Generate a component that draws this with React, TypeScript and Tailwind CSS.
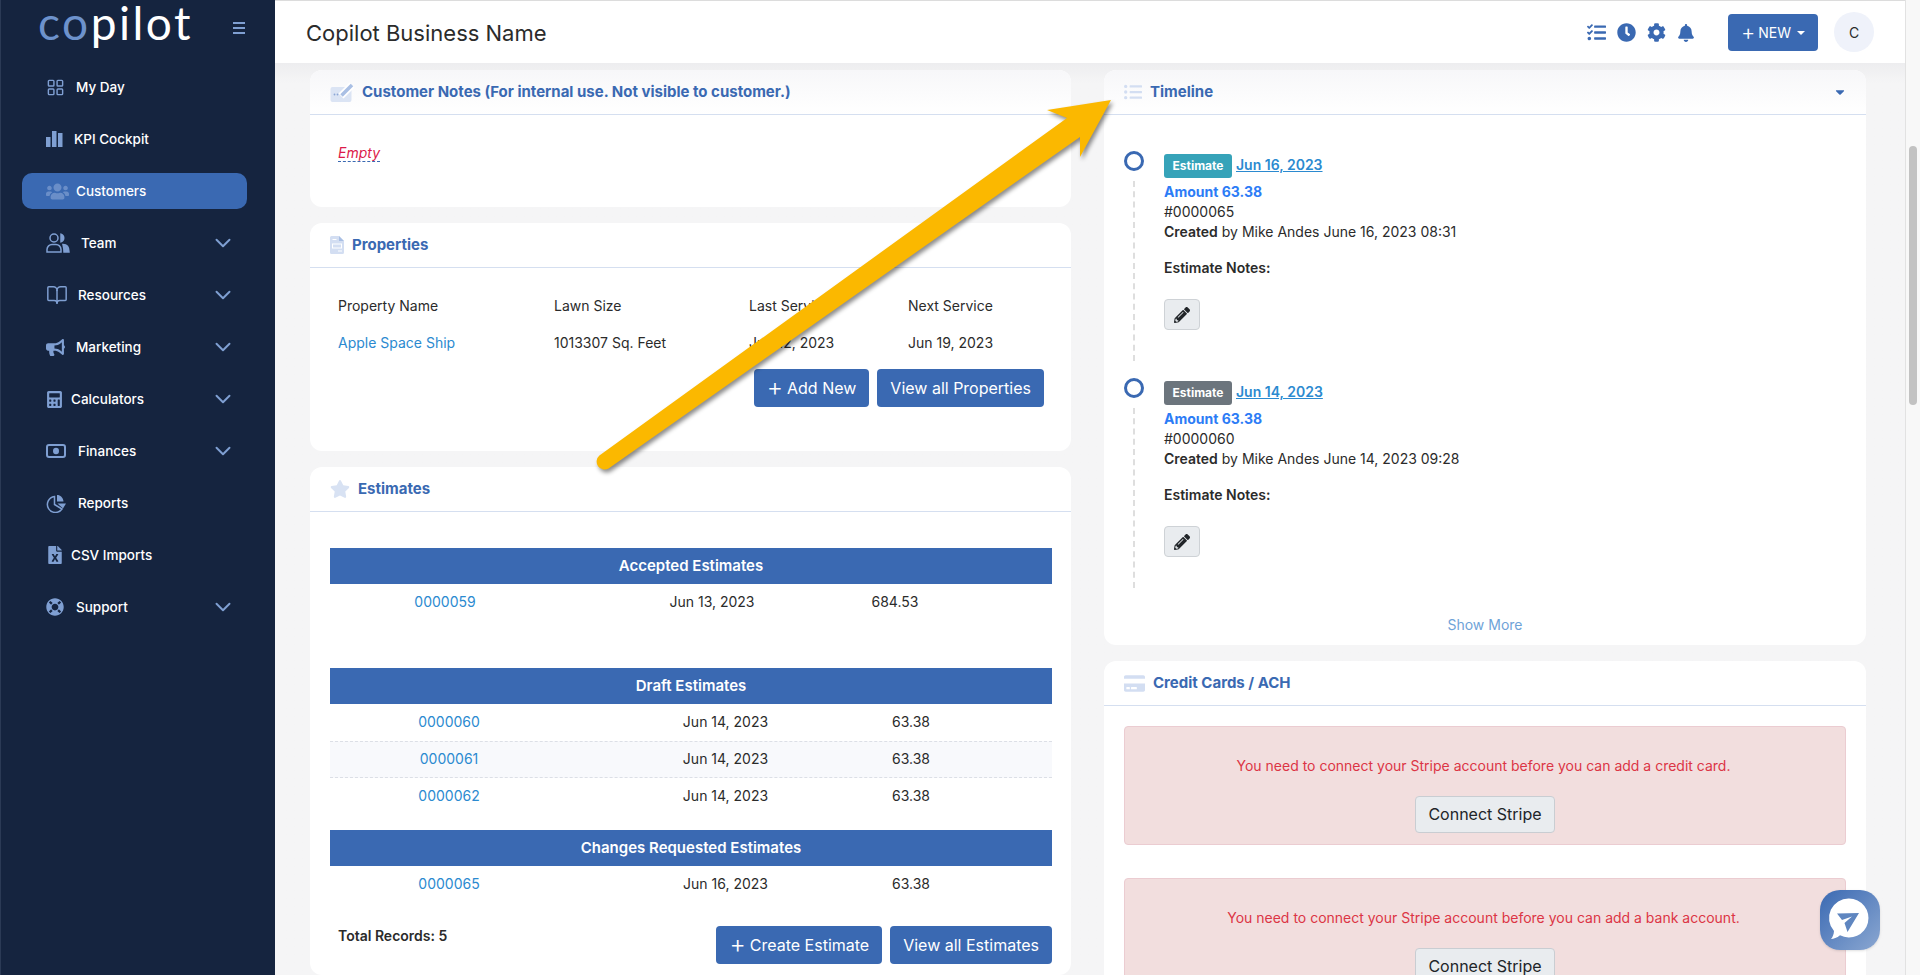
import React from 'react';
import { BookOpen, ChevronDown, LayoutGrid } from 'lucide-react';
import {
  FaBell,
  FaBullhorn,
  FaCalculator,
  FaCaretDown,
  FaClock,
  FaCog,
  FaCreditCard,
  FaFileExcel,
  FaLifeRing,
  FaListUl,
  FaPencilAlt,
  FaStar,
  FaTasks,
  FaUsers,
} from 'react-icons/fa';

const KpiIcon = () => (
  <svg width="17" height="16" viewBox="0 0 17 16" fill="currentColor">
    <rect x="0" y="6" width="4.5" height="10" />
    <rect x="6" y="0" width="4.5" height="16" />
    <rect x="12" y="2" width="4.5" height="14" />
  </svg>
);

const TeamIcon = () => (
  <svg width="24" height="20" viewBox="0 0 24 20" fill="none" stroke="currentColor" strokeWidth="1.5">
    <circle cx="8" cy="5" r="4" />
    <path d="M1 19v-2.500c0-3 2.500-5 5-5h4c2.500 0 5 2 5 5V19z" />
    <path d="M15 1.200a4 4 0 0 1 0 7.600z" fill="currentColor" />
    <path d="M17 11.500c3.500 0 6 2.500 6 7.500h-5c0-3-.5-5.500-1-7.500z" fill="currentColor" />
  </svg>
);

const MoneyIcon = () => (
  <svg width="20" height="14" viewBox="0 0 20 14" fill="none">
    <rect x="1" y="1" width="18" height="12" rx="2" stroke="currentColor" strokeWidth="2" />
    <ellipse cx="10" cy="7" rx="3" ry="3.300" fill="currentColor" />
  </svg>
);

const ReportIcon = () => (
  <svg width="20" height="19" viewBox="0 0 20 19" fill="none" stroke="currentColor" strokeWidth="1.5">
    <path d="M8.500 2.500a8 8 0 1 0 7.500 12.500l-7.500-4.500z" />
    <path d="M11 1c3.500 0 6 2.500 6.500 6.500H11z" fill="currentColor" stroke="none" />
    <path d="M11.500 9.500H20l-3 5z" fill="currentColor" stroke="none" />
  </svg>
);

const NotesIcon = () => (
  <svg width="24" height="20" viewBox="0 0 24 20">
    <rect x="0.500" y="5" width="21" height="15" rx="2" fill="#dbe4f4" />
    <path d="M11 14L22 3" stroke="#fff" strokeWidth="7" />
    <path d="M11.500 13.500L22 3" stroke="#a9bfe4" strokeWidth="3.500" />
    <circle cx="4.500" cy="12.500" r="0.900" fill="#8ba6d6" />
    <circle cx="7.500" cy="12.500" r="0.900" fill="#8ba6d6" />
  </svg>
);

const PropertyIcon = () => (
  <svg width="14" height="18" viewBox="0 0 14 18" className="text-[#d3def2]" fill="currentColor">
    <path d="M1.500 0H9l5 5v11.500a1.500 1.500 0 0 1-1.500 1.500h-11A1.500 1.500 0 0 1 0 16.500v-15A1.500 1.500 0 0 1 1.500 0z" />
    <path d="M9 0l5 5H9z" fill="#a9bfe4" />
    <rect x="2.500" y="8" width="9" height="4" fill="none" stroke="#fff" strokeWidth="1" />
    <rect x="2.500" y="3" width="4" height="1" fill="#fff" />
    <rect x="8" y="14.500" width="4" height="1" fill="#fff" />
  </svg>
);

const navItems = [
  { label: 'My Day', icon: <LayoutGrid size={19} strokeWidth={1.8} />, labelClass: 'ml-[4px]' },
  { label: 'KPI Cockpit', icon: <KpiIcon />, labelClass: 'ml-[2px]' },
  { label: 'Customers', icon: <FaUsers size={23} className="opacity-70" />, labelClass: 'ml-[4px]', active: true },
  { label: 'Team', icon: <TeamIcon />, labelClass: 'ml-[9px]', arrow: true },
  { label: 'Resources', icon: <BookOpen size={22} strokeWidth={1.6} />, labelClass: 'ml-[6px]', arrow: true },
  { label: 'Marketing', icon: <FaBullhorn size={19} />, labelClass: 'ml-[4px]', arrow: true },
  { label: 'Calculators', icon: <FaCalculator size={17} />, labelClass: '-ml-[1px]', arrow: true },
  { label: 'Finances', icon: <MoneyIcon />, labelClass: 'ml-[6px]', arrow: true },
  { label: 'Reports', icon: <ReportIcon />, labelClass: 'ml-[6px]' },
  { label: 'CSV Imports', icon: <FaFileExcel size={18} />, labelClass: '-ml-[1px]' },
  { label: 'Support', icon: <FaLifeRing size={18} />, labelClass: 'ml-[4px]', arrow: true },
];

const Card = ({ icon, title, className, action, shaded, children }: { icon: React.ReactNode; title: string; className?: string; action?: React.ReactNode; shaded?: boolean; children: React.ReactNode }) => (
  <section className={`bg-white rounded-xl ${className ?? ''}`}>
    <div className={`h-[45px] flex items-center px-[20px] gap-[8px] border-b border-[#d5dff0] rounded-t-xl ${shaded ? 'bg-gradient-to-b from-[#f7f7f9] to-white' : ''}`}>
      {icon}
      <h3 className="text-[15px] font-bold text-[#3a69b2]">{title}</h3>
      {action}
    </div>
    {children}
  </section>
);

const BlueButton = ({ children }: { children: React.ReactNode }) => (
  <button className="h-[38px] px-[13px] rounded bg-[#3a69b2] text-white text-[16px] flex items-center">{children}</button>
);

const Plus = () => <span className="text-[25px] leading-none font-light mr-[4px] -mt-[2px]">+</span>;

const EstimateBand = ({ title, className }: { title: string; className?: string }) => (
  <div className={`h-[36px] flex items-center justify-center bg-[#3a69b2] text-white text-[15px] font-semibold ${className ?? ''}`}>{title}</div>
);

const EstimateRow = ({ id, date, total, shaded, wide }: { id: string; date: string; total: string; shaded?: boolean; wide?: boolean }) => (
  <div
    className={`h-[37px] pb-[2px] grid items-center text-center text-[14px] text-[#2b2b2b] ${wide ? 'grid-cols-[230px_304px_62px_1fr]' : 'grid-cols-[238px_315px_56px_1fr]'} ${shaded ? 'bg-[#f8f9fc] border-y border-dashed border-[#dcdfe6]' : ''}`}
  >
    <a className="text-[#2b8ad0]">{id}</a>
    <span>{date}</span>
    <span>{total}</span>
  </div>
);

const TimelineItem = ({ badgeClass, date, number, created }: { badgeClass: string; date: string; number: string; created: string }) => (
  <div className="h-[227px] flex text-[14px] text-[#2b2b2b]">
    <div className="w-[20px] flex flex-col items-center pb-[17px] shrink-0">
      <div className="w-[20px] h-[20px] rounded-full border-[3px] border-[#3a69b2]" />
      <div className="mt-[10px] flex-1 border-l-2 border-dashed border-[#dedede]" />
    </div>
    <div className="ml-[20px] pt-[3px]">
      <div className="flex items-start h-[24px] gap-[4px]">
        <span className={`h-[24px] w-[68px] rounded-[3px] text-white text-[12px] font-bold flex items-center justify-center ${badgeClass}`}>Estimate</span>
        <a className="text-[#2b8ad0] font-semibold underline leading-[20px] mt-[1px]">{date}</a>
      </div>
      <div className="mt-[4px] leading-[20px] font-bold text-[#2c7cf6]">Amount 63.38</div>
      <div className="leading-[20px]">{number}</div>
      <div className="leading-[20px]"><b className="font-semibold">Created</b> by Mike Andes {created}</div>
      <div className="mt-[16px] leading-[20px] font-semibold">Estimate Notes:</div>
      <button className="mt-[21px] w-[36px] h-[31px] flex items-center justify-center rounded bg-[#e9ecef] border border-[#ced2d6]">
        <FaPencilAlt size={16} className="text-[#212529]" />
      </button>
    </div>
  </div>
);

const StripeAlert = ({ text, className }: { text: string; className?: string }) => (
  <div className={`h-[119px] pt-[28px] rounded border border-[#ebccd1] bg-[#f2dede] flex flex-col items-center shrink-0 ${className ?? ''}`}>
    <p className="text-[14px] leading-[21px] text-[#dc3545] pr-[3px]">{text}</p>
    <button className="mt-[20px] h-[37px] pb-[2px] w-[140px] shrink-0 rounded bg-[#e9ecef] border border-[#c9cdd2] text-[16px] text-[#212529]">Connect Stripe</button>
  </div>
);

export default function App() {
  return (
    <div className="relative h-screen overflow-hidden flex bg-[#f5f5f6] font-['Inter',sans-serif]">
      {/* sidebar */}
      <aside className="w-[275px] shrink-0 bg-[#15243f] border-l border-[#2b3a55]">
        <div className="h-[61px] flex items-start pl-[37px] pr-[30px]">
          <div className="font-['Lato',sans-serif] font-normal text-[46px] leading-[46px] tracking-[2.5px]">
            <span className="text-[#6d92cc]">co</span>
            <span className="text-white">pilot</span>
          </div>
          <div className="ml-auto mt-[22px] w-[12px] flex flex-col gap-[3px]">
            <span className="h-[2px] bg-[#7f9fd2]" />
            <span className="h-[2px] bg-[#7f9fd2]" />
            <span className="h-[2px] bg-[#7f9fd2]" />
          </div>
        </div>
        <nav className="pl-[21px] pr-[28px]">
          {navItems.map((item) => (
            <div key={item.label} className="h-[52px] flex items-center">
              <div className={`w-full h-[36px] rounded-[10px] flex items-center pl-[24px] pr-[11px] ${item.active ? 'bg-[#3a69b2]' : ''}`}>
                <span className="w-[26px] flex items-center text-[#7f9fd2] shrink-0">{item.icon}</span>
                <span className={`text-[13.5px] font-medium text-white ${item.labelClass}`}>{item.label}</span>
                {item.arrow && <ChevronDown size={26} strokeWidth={1.8} className="ml-auto text-[#7f9fd2]" />}
              </div>
            </div>
          ))}
        </nav>
      </aside>

      {/* main column */}
      <div className="flex-1 min-w-0 flex flex-col">
        <header className="h-[63px] shrink-0 bg-white border-t border-[#dcdcdc] flex items-center pl-[31px] pr-[31px]">
          <h1 className="text-[22px] text-[#2b2b2b] mt-[2px]">Copilot Business Name</h1>
          <div className="ml-auto flex items-center gap-[11px] text-[#3a69b2] mt-[1px]">
            <FaTasks size={19} />
            <FaClock size={19} />
            <FaCog size={19} />
            <FaBell size={18} />
          </div>
          <button className="ml-[33px] w-[90px] h-[37px] rounded bg-[#3a69b2] text-white text-[14px] flex items-center justify-center gap-[6px] mt-[1px]">
            <span className="flex items-center">
              <span className="text-[22px] leading-none font-light mr-[3px] -mt-[2px]">+</span>NEW
            </span>
            <span className="border-x-4 border-x-transparent border-t-4 border-t-white" />
          </button>
          <div className="ml-[16px] w-[40px] h-[40px] rounded-full bg-[#eff2fa] flex items-center justify-center text-[14px] text-[#2b2b2b]">C</div>
        </header>

        <main className="flex-1 min-h-0 overflow-hidden flex gap-[33px] pl-[35px] pr-[39px] pt-[7px] bg-gradient-to-b from-[#ededef] to-[#f5f5f6] to-[20px]">
          {/* left column */}
          <div className="w-[761px] shrink-0 flex flex-col gap-[16px]">
            <Card icon={<NotesIcon />} title="Customer Notes (For internal use. Not visible to customer.)" className="h-[137px] shrink-0" shaded>
              <div className="pl-[28px] pt-[27px] leading-[20px]">
                <span className="text-[14px] italic text-[#dc1a4a] border-b border-dashed border-[#3a69b2]">Empty</span>
              </div>
            </Card>

            <Card icon={<PropertyIcon />} title="Properties" className="h-[228px] shrink-0">
              <div className="pl-[28px] pr-[27px] text-[14px] text-[#2b2b2b]">
                <div className="grid grid-cols-[216px_195px_159px_1fr] h-[37px] pb-[2px] mt-[20px] items-center">
                  <span>Property Name</span>
                  <span>Lawn Size</span>
                  <span>Last Service</span>
                  <span>Next Service</span>
                </div>
                <div className="grid grid-cols-[216px_195px_159px_1fr] h-[37px] pb-[2px] items-center">
                  <a className="text-[#2b8ad0]">Apple Space Ship</a>
                  <span>1013307 Sq. Feet</span>
                  <span>Jun 12, 2023</span>
                  <span>Jun 19, 2023</span>
                </div>
                <div className="flex justify-end gap-[8px] mt-[7px]">
                  <BlueButton><Plus />Add New</BlueButton>
                  <BlueButton>View all Properties</BlueButton>
                </div>
              </div>
            </Card>

            <Card icon={<FaStar size={20} className="text-[#d8e2f3]" />} title="Estimates" className="flex-1">
              <div className="pl-[20px] pr-[19px] pt-[36px]">
                <EstimateBand title="Accepted Estimates" />
                <EstimateRow id="0000059" date="Jun 13, 2023" total="684.53" wide />
                <EstimateBand title="Draft Estimates" className="mt-[47px]" />
                <EstimateRow id="0000060" date="Jun 14, 2023" total="63.38" />
                <EstimateRow id="0000061" date="Jun 14, 2023" total="63.38" shaded />
                <EstimateRow id="0000062" date="Jun 14, 2023" total="63.38" />
                <EstimateBand title="Changes Requested Estimates" className="mt-[15px]" />
                <EstimateRow id="0000065" date="Jun 16, 2023" total="63.38" />
                <div className="flex items-start mt-[23px]">
                  <b className="ml-[8px] text-[14px] leading-[20px] font-semibold text-[#2b2b2b]">Total Records: 5</b>
                  <div className="ml-auto flex gap-[8px]">
                    <BlueButton><Plus />Create Estimate</BlueButton>
                    <BlueButton>View all Estimates</BlueButton>
                  </div>
                </div>
              </div>
            </Card>
          </div>

          {/* right column */}
          <div className="w-[762px] shrink-0 flex flex-col gap-[16px]">
            <Card
              icon={<FaListUl size={18} className="text-[#d3def2]" />}
              title="Timeline"
              className="h-[575px] shrink-0"
              shaded
              action={<FaCaretDown size={14} className="ml-auto -mr-[1px] text-[#3a69b2]" />}
            >
              <div className="px-[20px] pt-[36px]">
                <TimelineItem badgeClass="bg-[#36a3b9]" date="Jun 16, 2023" number="#0000065" created="June 16, 2023 08:31" />
                <TimelineItem badgeClass="bg-[#6c757d]" date="Jun 14, 2023" number="#0000060" created="June 14, 2023 09:28" />
                <div className="mt-[10px] text-center text-[14px] leading-[20px] text-[#6fa3d8]">Show More</div>
              </div>
            </Card>

            <Card icon={<FaCreditCard size={21} className="text-[#d3def2]" />} title="Credit Cards / ACH" className="flex-1">
              <div className="px-[20px] pt-[20px] flex flex-col gap-[33px]">
                <StripeAlert text="You need to connect your Stripe account before you can add a credit card." />
                <StripeAlert text="You need to connect your Stripe account before you can add a bank account." />
              </div>
            </Card>
          </div>
        </main>
      </div>

      {/* scrollbar */}
      <div className="w-[15px] shrink-0 bg-[#f8f8f8] border-l border-[#e2e2e2] pt-[146px] flex justify-center">
        <div className="w-[8px] h-[259px] rounded bg-[#c2c2c2]" />
      </div>

      {/* annotation arrow */}
      <svg className="absolute inset-0 w-full h-full pointer-events-none drop-shadow-[2px_3px_2px_rgba(0,0,0,0.45)]" viewBox="0 0 1920 975">
        <path d="M599.400 455.500L1067 118L1047 110L1111 100L1080 157L1080 137L608.600 468.500A8 8 0 0 1 599.400 455.500Z" fill="#fbb800" />
      </svg>

      {/* chat launcher */}
      <button className="absolute left-[1820px] top-[890px] w-[60px] h-[60px] rounded-[20px] bg-gradient-to-br from-[#3a69b2] to-[#8ba7d1] shadow-sm">
        <svg width="60" height="60" viewBox="0 0 60 60">
          <path d="M29 8.500a19.500 19.500 0 1 1-9 36.800c-3 2.500-6.500 3.700-9 3.700 1.700-2 2.800-4.500 3-8A19.500 19.500 0 0 1 29 8.500z" fill="#fff" />
          <path d="M17 23.500L39 23L27.500 42L24.500 33L32 26.500L22 30Z" fill="#5f86c0" />
        </svg>
      </button>
    </div>
  );
}
